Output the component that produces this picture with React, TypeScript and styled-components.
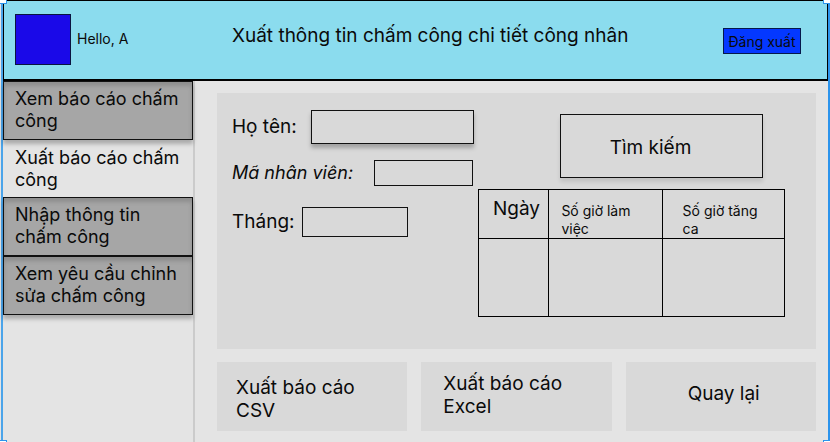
import React from 'react';
import styled, { createGlobalStyle, css } from 'styled-components';

const GlobalStyle = createGlobalStyle`
  *, *::before, *::after { box-sizing: border-box; }
  body { margin: 0; background: #e4e4e4; color: #0a0a0a; font: 400 18px/22px Inter, sans-serif; }
  button, input { font: inherit; color: inherit; border-radius: 0; margin: 0; }
  button { cursor: pointer; }
`;

const Frame = styled.div`
  position: relative;
  display: flex;
  flex-direction: column;
  min-height: 100vh;
  margin: 0 0 0 1px;
  border-left: 2px solid #4ba4ea;
  border-right: 2px solid #2c94ec;
  background: #e4e4e4;
`;

const SelectionLayer = styled.div`
  position: absolute;
  inset: 0 -2px 0 -3px;
  overflow: hidden;
  pointer-events: none;
`;

const Handle = styled.span<{ $side: 'left' | 'right'; $edge: 'top' | 'bottom' }>`
  position: absolute;
  ${(p) => p.$side}: -3px;
  ${(p) => p.$edge}: ${(p) => (p.$edge === 'top' ? '-6px' : '-8px')};
  width: 10px;
  height: 10px;
  border: 1px solid #2c94ec;
  background: #fff;
`;

const Header = styled.header`
  display: flex;
  align-items: flex-start;
  min-height: 81px;
  padding: 13px 26px 12px 11px;
  border: 1px solid #000;
  border-bottom-width: 2px;
  background: #8bdcee;
`;

const Avatar = styled.div`
  flex: none;
  width: 56px;
  height: 51px;
  border: 1px solid #0a1440;
  background: #1a09e8;
`;

const Greeting = styled.span`
  flex: none;
  width: 161px;
  padding: 14px 0 0 6px;
  font-size: 14px;
`;

const Title = styled.h1`
  flex: 1;
  margin: 10px 0 0;
  font-size: 19px;
  line-height: 24px;
  font-weight: 400;
`;

const Logout = styled.button`
  flex: none;
  width: 78px;
  height: 26px;
  margin-top: 14px;
  padding: 1px 0 0;
  border: 1px solid #06184a;
  background: #0438ff;
  font-size: 14px;
  line-height: 20px;
  white-space: nowrap;
`;

const Body = styled.div`
  display: flex;
  flex: 1;
`;

const Sidebar = styled.nav`
  flex: none;
  width: 192px;
  border-right: 2px solid #cbcbcb;
`;

const NavLink = styled.a<{ $active?: boolean }>`
  display: block;
  height: 59px;
  padding: 6px 8px 6px 11px;
  border: 1px solid #111;
  background: #a6a6a6;
  box-shadow: 0 4px 4px rgba(0, 0, 0, 0.25), inset 0 4px 4px rgba(0, 0, 0, 0.15);
  color: inherit;
  text-decoration: none;
  ${(p) =>
    p.$active &&
    css`
      height: 57px;
      border-color: transparent;
      background: transparent;
      box-shadow: none;
    `}
`;

const Main = styled.main`
  flex: 1;
  display: flex;
  flex-direction: column;
  gap: 13px;
  padding: 12px 12px 11px 22px;
`;

const Panel = styled.section`
  display: flex;
  min-height: 256px;
  padding: 17px 31px 31px 15px;
  background: #d9d9d9;
`;

const Form = styled.form`
  flex: none;
  width: 246px;
  font-size: 19px;
`;

const Field = styled.div<{ $gap?: number }>`
  display: flex;
  align-items: center;
  margin-bottom: ${(p) => p.$gap ?? 0}px;
`;

const Label = styled.label<{ $width: number; $italic?: boolean }>`
  flex: none;
  width: ${(p) => p.$width}px;
  font-size: ${(p) => (p.$italic ? 18 : 19)}px;
  font-style: ${(p) => (p.$italic ? 'italic' : 'normal')};
`;

const Input = styled.input<{ $width: number; $height: number; $raised?: boolean }>`
  width: ${(p) => p.$width}px;
  height: ${(p) => p.$height}px;
  padding: 0 6px;
  border: 1px solid #111;
  background: #d9d9d9;
  box-shadow: ${(p) => (p.$raised ? '0 4px 4px rgba(0, 0, 0, 0.25)' : 'none')};
`;

const Results = styled.div`
  flex: 1;
  display: flex;
  flex-direction: column;
  padding-top: 4px;
`;

const Search = styled.button`
  align-self: flex-end;
  width: 203px;
  height: 64px;
  margin: 0 22px 11px 0;
  padding: 3px 22px 0 0;
  border: 1px solid #111;
  background: #d9d9d9;
  box-shadow: 0 4px 4px rgba(0, 0, 0, 0.1);
  font-size: 19px;
`;

const Table = styled.table`
  width: 100%;
  border-collapse: collapse;
  table-layout: fixed;
`;

const Th = styled.th<{ $width: string; $large?: boolean; $inset: number }>`
  width: ${(p) => p.$width};
  height: 48px;
  padding: ${(p) => (p.$large ? '7px' : '12px')} 0 0 ${(p) => p.$inset}px;
  border: 1px solid #000;
  font-size: ${(p) => (p.$large ? 19 : 14)}px;
  line-height: ${(p) => (p.$large ? 24 : 18)}px;
  font-weight: 400;
  text-align: left;
  vertical-align: top;
`;

const Td = styled.td`
  height: 78px;
  padding: 0;
  border: 1px solid #000;
`;

const Actions = styled.div`
  display: grid;
  grid-template-columns: repeat(3, minmax(0, 1fr));
  gap: 14px;
`;

const Action = styled.button<{ $pad: string }>`
  display: flex;
  align-items: flex-start;
  height: 69px;
  padding: ${(p) => p.$pad};
  border: 0;
  background: #d9d9d9;
  font-size: 19px;
  line-height: 23px;
  text-align: left;
`;

export default function App() {
  return (
    <>
      <GlobalStyle />
      <Frame>
        <Header>
          <Avatar />
          <Greeting>Hello, A</Greeting>
          <Title>Xuất thông tin chấm công chi tiết công nhân</Title>
          <Logout type="button">Đăng xuất</Logout>
        </Header>
        <Body>
          <Sidebar>
            <NavLink href="#view">Xem báo cáo chấm công</NavLink>
            <NavLink href="#export" $active aria-current="page">Xuất báo cáo chấm công</NavLink>
            <NavLink href="#entry">Nhập thông tin chấm công</NavLink>
            <NavLink href="#requests">Xem yêu cầu chỉnh sửa chấm công</NavLink>
          </Sidebar>
          <Main>
            <Panel>
              <Form id="search-form" onSubmit={(e) => e.preventDefault()}>
                <Field $gap={16}>
                  <Label htmlFor="name" $width={79}>Họ tên:</Label>
                  <Input id="name" $width={163} $height={34} $raised />
                </Field>
                <Field $gap={21}>
                  <Label htmlFor="code" $width={142} $italic>Mã nhân viên:</Label>
                  <Input id="code" $width={99} $height={26} />
                </Field>
                <Field>
                  <Label htmlFor="month" $width={70}>Tháng:</Label>
                  <Input id="month" $width={106} $height={30} />
                </Field>
              </Form>
              <Results>
                <Search type="submit" form="search-form">Tìm kiếm</Search>
                <Table>
                  <thead>
                    <tr>
                      <Th scope="col" $width="23%" $large $inset={14}>Ngày</Th>
                      <Th scope="col" $width="37%" $inset={12}>Số giờ làm<br />việc</Th>
                      <Th scope="col" $width="40%" $inset={20}>Số giờ tăng<br />ca</Th>
                    </tr>
                  </thead>
                  <tbody>
                    <tr><Td /><Td /><Td /></tr>
                  </tbody>
                </Table>
              </Results>
            </Panel>
            <Actions>
              <Action type="button" $pad="14px 40px 0 19px">Xuất báo cáo CSV</Action>
              <Action type="button" $pad="10px 40px 0 22px">Xuất báo cáo Excel</Action>
              <Action type="button" $pad="20px 20px 0 62px">Quay lại</Action>
            </Actions>
          </Main>
        </Body>
        <SelectionLayer aria-hidden="true">
          <Handle $side="left" $edge="top" />
          <Handle $side="right" $edge="top" />
          <Handle $side="left" $edge="bottom" />
          <Handle $side="right" $edge="bottom" />
        </SelectionLayer>
      </Frame>
    </>
  );
}
